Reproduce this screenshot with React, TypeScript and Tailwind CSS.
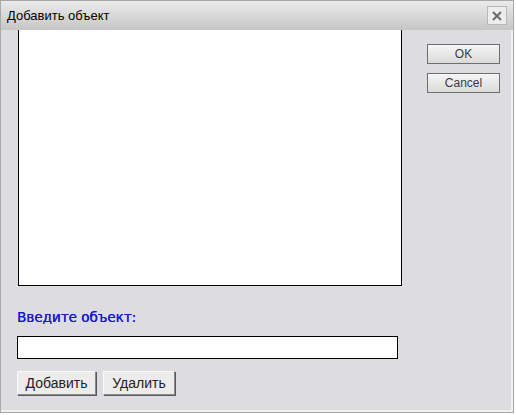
import { useState } from "react";

export default function App() {
  const [value, setValue] = useState("");

  return (
    <div className="h-[415px] w-[516px] bg-white font-['Liberation_Sans',Arial,sans-serif]">
      <div className="flex h-[413px] w-[514px] flex-col border border-[#a8a8a8] bg-[#dddde1] shadow-[inset_-2px_-2px_0_#f0f0f2]">
        {/* title bar */}
        <div className="flex h-[29px] shrink-0 items-center justify-between bg-gradient-to-b from-[#ebebeb] to-[#c6c6c6] pl-[6px] pr-[6px]">
          <span className="text-[13px] text-black">Добавить объект</span>
          <button
            type="button"
            className="flex h-[19px] w-[20px] items-center justify-center border border-[#b8b8b8] bg-[#ededed] text-[#6a6a6a]"
          >
            <svg width="12" height="12" viewBox="0 0 12 12">
              <path d="M2 2 L10 10 M10 2 L2 10" stroke="currentColor" strokeWidth="2" />
            </svg>
          </button>
        </div>

        <div className="flex min-h-0 flex-1 pl-[16px]">
          <div className="flex w-[386px] flex-col">
            <div className="ml-[1px] h-[256px] w-[384px] border-x border-b border-black bg-white" />
            <div className="mt-[22px] font-['DejaVu_Sans',Verdana,sans-serif] text-[13.5px] leading-[18px] text-[#1818d0] [text-shadow:0.3px_0_0_#1818d0]">
              Введите объект:
            </div>
            <input
              type="text"
              value={value}
              onChange={(e) => setValue(e.target.value)}
              className="mt-[10px] h-[23px] w-[381px] border border-black bg-white px-1 text-[13px] outline-none"
            />
            <div className="mt-[12px] flex gap-[7px]">
              <button type="button" className={classicBtn + " w-[79px]"}>Добавить</button>
              <button type="button" className={classicBtn + " w-[72px]"}>Удалить</button>
            </div>
          </div>

          <div className="ml-[24px] flex flex-col gap-[9px] pt-[14px]">
            <button type="button" className={dialogBtn}>OK</button>
            <button type="button" className={dialogBtn}>Cancel</button>
          </div>
        </div>
      </div>
    </div>
  );
}

const dialogBtn = `
  h-[20px] w-[73px] border border-[#6e6e6e] bg-gradient-to-b from-[#f6f6f6] to-[#dadada]
  text-[12px] leading-none text-[#3a3a3a]
`;
const classicBtn = `
  h-[24px] border border-t-[#fafafa] border-l-[#fafafa] border-b-[#8a8a8a] border-r-[#8a8a8a]
  bg-[#ececec] text-[14px] leading-none text-[#222]
  shadow-[1px_1px_0_#5a5a5a]
`;
